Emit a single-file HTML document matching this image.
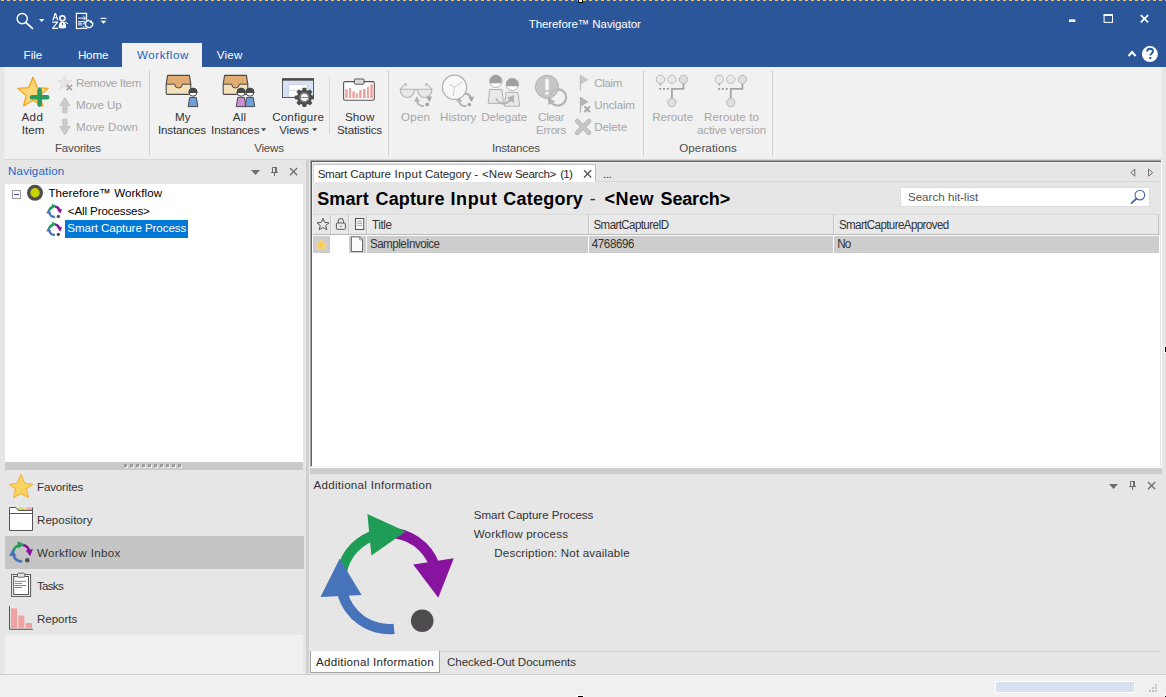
<!DOCTYPE html>
<html>
<head>
<meta charset="utf-8">
<title>Therefore Navigator</title>
<style>
html,body{margin:0;padding:0;}
body{width:1166px;height:697px;position:relative;overflow:hidden;background:#e6e6e6;font-family:"Liberation Sans",sans-serif;}
.a{position:absolute;}
.t{position:absolute;white-space:pre;line-height:20px;font-family:"Liberation Sans",sans-serif;}
svg{position:absolute;overflow:visible;}
</style>
</head>
<body>
<!-- ===== window frame / title bar ===== -->
<div class="a" id="titlebar" style="left:0;top:0;width:1166px;height:67px;background:#2b579a;"></div>
<div class="a" id="dash" style="left:1px;top:0;width:1165px;height:1px;background:repeating-linear-gradient(90deg,#f4c35e 0,#f4c35e 3px,#2b579a 3px,#2b579a 6px);"></div>
<div class="a" style="left:578px;top:0;width:3px;height:2px;background:#fff;border:1px solid #000;border-top:none;"></div>

<!-- active ribbon tab -->
<div class="a" style="left:122px;top:43px;width:80px;height:24px;background:#f1f1f1;"></div>

<!-- ===== ribbon ===== -->
<div class="a" style="left:0;top:67px;width:1166px;height:94px;background:#e6e6e6;"></div>
<div class="a" id="ribbon" style="left:4px;top:67px;width:1156px;height:92px;background:#f1f1f1;border-bottom:1px solid #d6d6d6;border-left:1px solid #ececec;border-right:1px solid #ececec;box-sizing:content-box;"></div>
<!-- group separators -->
<div class="a" style="left:149px;top:70px;width:1px;height:86px;background:#d2d2d2;"></div>
<div class="a" style="left:388px;top:70px;width:1px;height:86px;background:#d2d2d2;"></div>
<div class="a" style="left:643px;top:70px;width:1px;height:86px;background:#d2d2d2;"></div>
<div class="a" style="left:772px;top:70px;width:1px;height:86px;background:#d2d2d2;"></div>
<div class="a" style="left:329px;top:77px;width:1px;height:57px;background:#d8d8d8;"></div>

<!-- ===== body background ===== -->
<div class="a" style="left:0;top:160px;width:5px;height:514px;background:#e6e6e6;"></div>
<div class="a" style="left:1162px;top:160px;width:4px;height:514px;background:#e6e6e6;"></div>

<!-- ===== navigation panel ===== -->
<div class="a" id="navtree" style="left:5px;top:184px;width:298px;height:278px;background:#ffffff;"></div>
<div class="a" style="left:65px;top:220px;width:123px;height:18px;background:#0078d7;"></div>
<!-- gripper -->
<div class="a" style="left:5px;top:462px;width:298px;height:8px;background:#cacaca;"></div>
<div class="a" id="grip" style="left:124px;top:464px;width:60px;height:3px;"></div>
<!-- nav list -->
<div class="a" style="left:5px;top:536px;width:299px;height:33px;background:#c5c5c5;"></div>
<div class="a" style="left:5px;top:635px;width:298px;height:39px;background:#f0f0f0;"></div>
<!-- vertical splitter -->
<div class="a" style="left:306px;top:160px;width:3px;height:514px;background:#d0d0d0;"></div><div class="a" style="left:309px;top:160px;width:1px;height:514px;background:#ebebeb;"></div>

<!-- ===== main hit-list panel ===== -->
<div class="a" id="main" style="left:310px;top:160px;width:851px;height:307px;background:#e6e6e6;"></div>
<div class="a" style="left:310px;top:160px;width:852px;height:1px;background:#a6a6a6;"></div><div class="a" style="left:311px;top:161px;width:850px;height:1px;background:#626262;"></div>
<div class="a" style="left:310px;top:160px;width:1px;height:307px;background:#a6a6a6;"></div><div class="a" style="left:311px;top:161px;width:1px;height:305px;background:#626262;"></div>
<div class="a" style="left:312px;top:162px;width:848px;height:1px;background:#f2f2f2;"></div><div class="a" style="left:312px;top:162px;width:1px;height:73px;background:#f2f2f2;"></div>
<div class="a" style="left:1160px;top:162px;width:1px;height:304px;background:#e3e3e3;"></div><div class="a" style="left:1161px;top:160px;width:1px;height:307px;background:#fcfcfc;"></div>
<div class="a" style="left:312px;top:466px;width:849px;height:1px;background:#f2f2f2;"></div><div class="a" style="left:310px;top:467px;width:852px;height:1px;background:#ffffff;"></div>
<!-- tab -->
<div class="a" style="left:313px;top:164px;width:283px;height:18px;background:#ffffff;border-top:1px solid #c4c4c4;border-right:1px solid #bcbcbc;border-left:1px solid #d4d4d4;box-sizing:border-box;"></div>
<div class="a" style="left:595px;top:181px;width:565px;height:1px;background:#d6d6d6;"></div>
<!-- search box -->
<div class="a" style="left:900px;top:187px;width:250px;height:20px;background:#ffffff;border:1px solid #dcdcdc;box-sizing:border-box;"></div>
<!-- header row -->
<div class="a" id="hdr" style="left:313px;top:214px;width:845px;height:19px;background:#e9e9e9;border-top:1px solid #dcdcdc;border-bottom:1px solid #b9b9b9;border-right:1px solid #c0c0c0;"></div>
<div class="a" style="left:330px;top:215px;width:1px;height:19px;background:#c4c4c4;"></div><div class="a" style="left:331px;top:215px;width:1px;height:19px;background:#f2f2f2;"></div>
<div class="a" style="left:348px;top:215px;width:1px;height:19px;background:#c4c4c4;"></div><div class="a" style="left:349px;top:215px;width:1px;height:19px;background:#f2f2f2;"></div>
<div class="a" style="left:366px;top:215px;width:1px;height:19px;background:#c4c4c4;"></div><div class="a" style="left:367px;top:215px;width:1px;height:19px;background:#f2f2f2;"></div>
<div class="a" style="left:588px;top:215px;width:1px;height:19px;background:#c4c4c4;"></div><div class="a" style="left:589px;top:215px;width:1px;height:19px;background:#f2f2f2;"></div>
<div class="a" style="left:833px;top:215px;width:1px;height:19px;background:#c4c4c4;"></div><div class="a" style="left:834px;top:215px;width:1px;height:19px;background:#f2f2f2;"></div>
<!-- list body -->
<div class="a" style="left:312px;top:235px;width:848px;height:231px;background:#ffffff;"></div>
<div class="a" style="left:313px;top:236px;width:17px;height:17px;background:#cdcdcd;"></div>
<div class="a" style="left:349px;top:236px;width:17px;height:17px;background:#cdcdcd;"></div>
<div class="a" style="left:367px;top:236px;width:221px;height:17px;background:#cdcdcd;"></div>
<div class="a" style="left:589px;top:236px;width:244px;height:17px;background:#cdcdcd;"></div>
<div class="a" style="left:834px;top:236px;width:325px;height:17px;background:#cdcdcd;"></div>

<!-- horizontal splitter -->
<div class="a" style="left:310px;top:468px;width:852px;height:6px;background:#cecece;"></div>

<!-- ===== additional information panel ===== -->
<div class="a" style="left:310px;top:651px;width:851px;height:1px;background:#cfcfcf;"></div>
<div class="a" style="left:310px;top:651px;width:130px;height:22px;background:#ffffff;border:1px solid #a0a0a0;border-top:none;box-sizing:border-box;"></div>

<!-- ===== status bar ===== -->
<div class="a" style="left:0;top:674px;width:1166px;height:23px;background:#f0f0f0;border-top:1px solid #cfcfcf;box-sizing:border-box;"></div>
<div class="a" style="left:995px;top:681px;width:140px;height:12px;background:#d6e0f0;border:1px solid #ffffff;box-sizing:border-box;"></div>

<!-- ===== title bar icons ===== -->
<svg width="1166" height="67" style="left:0;top:0" viewBox="0 0 1166 67">
 <!-- magnifier -->
 <circle cx="22.2" cy="18.6" r="5.1" fill="none" stroke="#fff" stroke-width="1.4"/>
 <path d="M26 22.6 L32.4 28.4" stroke="#fff" stroke-width="1.7" stroke-linecap="round"/>
 <path d="M39 19 h5.4 l-2.7 3z" fill="#fff"/>
 <!-- A-Z person -->
 <g fill="#fff" stroke="none">
  <path d="M52.2 20.3 L54.7 13 h1.3 L58.4 20.3 h-1.3 l-0.65 -2 h-2.3 l-0.65 2z M54.5 17.2 h1.7 l-0.85 -2.7z"/>
  <path d="M52.4 21.6 h5.6 v0.9 l-4.2 5.3 h4.3 v1.1 h-5.9 v-0.9 l4.2 -5.3 h-4z"/>
  <circle cx="62.4" cy="18.2" r="3.3"/>
  <path d="M58.7 27.8 c0 -4.6 1.4 -6.4 3.7 -6.4 c2.3 0 3.7 1.8 3.7 6.4 q-3.7 1.6 -7.4 0z"/>
 </g>
 <circle cx="62.4" cy="18.2" r="1.7" fill="#2b579a"/>
 <rect x="61.9" y="23" width="1" height="2.4" fill="#2b579a"/>
 <path d="M65 21.7 l3 2.2" stroke="#fff" stroke-width="1"/>
 <!-- document w/ arrow -->
 <g>
  <rect x="76.5" y="13.4" width="10" height="15" fill="none" stroke="#fff" stroke-width="1.3"/>
  <rect x="77.2" y="14.1" width="3.6" height="13.6" fill="#244a86"/>
  <path d="M78 18.1 h7 M78 21.6 h6.4 M78 23.2 h3.8 M78 24.9 h3.8" stroke="#fff" stroke-width="1"/>
  <path d="M83.4 16.2 l2.2 1.9 l-2.2 1.9" fill="none" stroke="#fff" stroke-width="0.9"/>
  <path d="M84.6 21.6 v2.2 h-2" fill="none" stroke="#fff" stroke-width="0.9"/>
  <rect x="83" y="26.4" width="1.1" height="1.1" fill="#fff"/>
  <rect x="85" y="25.7" width="1.1" height="1.1" fill="#fff"/>
  <circle cx="89.2" cy="24" r="4.6" fill="#2b579a"/>
  <path d="M92.4 22.2 a3.7 3.7 0 1 1 -3.4 -2" fill="none" stroke="#fff" stroke-width="1.4"/>
  <path d="M87.6 20.4 h4.4 v3.4z" fill="#fff"/>
 </g>
 <!-- customize qat -->
 <rect x="100.6" y="17.8" width="5.8" height="1.1" fill="#fff"/>
 <path d="M100.6 20.7 h5.8 l-2.9 3z" fill="#fff"/>
 <!-- window controls -->
 <rect x="1069" y="19.4" width="6.3" height="2.6" fill="#fff"/>
 <rect x="1104.1" y="15.2" width="8.4" height="7.2" fill="none" stroke="#fff" stroke-width="1"/>
 <rect x="1103.6" y="14.1" width="9.4" height="1.8" fill="#fff"/>
 <path d="M1140.8 15.1 l7.3 7.3 M1148.1 15.1 l-7.3 7.3" stroke="#fff" stroke-width="1.7"/>
 <path d="M1128.6 56 l3.5 -3.9 l3.5 3.9" fill="none" stroke="#fff" stroke-width="2"/>
 <circle cx="1149.9" cy="54.1" r="8" fill="#fff"/>
 <path d="M1147.2 51.6 c0 -1.8 1.2 -2.8 2.8 -2.8 c1.7 0 2.9 1 2.9 2.5 c0 1.2 -0.6 1.8 -1.5 2.4 c-0.8 0.5 -1.1 0.9 -1.1 1.9" fill="none" stroke="#2b579a" stroke-width="1.9"/>
 <rect x="1149.3" y="57" width="2" height="2.1" fill="#2b579a"/>
</svg>
<!-- ===== ribbon icons ===== -->
<svg width="1166" height="93" style="left:0;top:67px" viewBox="0 67 1166 93">
 <defs>
  <!-- mini workflow arrows (disabled grey), centered at 0,0, r~5 -->
  <g id="wfgrey">
   <path d="M-6.3 0.6 Q-5.6 5.2 0.8 5.5" fill="none" stroke="#b4b4b4" stroke-width="1.9"/>
   <path d="M-9.3 1.1 L-3.3 1.1 L-6.4 -4.4z" fill="#b4b4b4"/>
   <path d="M-1.2 -7.2 Q3.6 -7.4 5.8 -2.6" fill="none" stroke="#acacac" stroke-width="2.2"/>
   <path d="M3.0 -3.2 L8.6 -4.3 L6.4 1.4z" fill="#a4a4a4"/>
   <circle cx="3.9" cy="3.9" r="1.9" fill="#a8a8a8"/>
  </g>
  <g id="reroute">
   <path d="M23.1 4.2 V9.5 H11.5 V19" fill="none" stroke="#a6a6a6" stroke-width="1.8"/>
   <path d="M0 4.2 V6.2" stroke="#a6a6a6" stroke-width="1.5"/>
   <path d="M-1.2 9.5 H9" stroke="#9c9c9c" stroke-width="1.8" stroke-dasharray="2 1.8"/>
   <circle cx="0" cy="0" r="4.2" fill="#e8e8e8" stroke="#b9b9b9" stroke-width="1"/>
   <circle cx="11.5" cy="0" r="4.2" fill="#e8e8e8" stroke="#c0c0c0" stroke-width="1"/>
   <circle cx="23.1" cy="0" r="4.2" fill="#dfdfdf" stroke="#b9b9b9" stroke-width="1"/>
   <circle cx="11.5" cy="23.1" r="4.2" fill="#dfdfdf" stroke="#b9b9b9" stroke-width="1"/>
  </g>
  <g id="inbox">
   <path d="M1.6 0.4 H23.4 L24.8 9.2 V18.2 a1.2 1.2 0 0 1 -1.2 1.2 H1.4 a1.2 1.2 0 0 1 -1.2 -1.2 V9.2z" fill="#f3e0b8" stroke="none"/>
   <path d="M1.6 0.4 H23.4 L24.8 9.2 H16.3 a3.8 3.8 0 0 1 -7.6 0 H0.2z" fill="#dfad72" stroke="none"/>
   <path d="M0.2 9.2 H8.7 a3.8 3.8 0 0 0 7.6 0 H24.8" fill="none" stroke="#4a4a4a" stroke-width="1"/>
   <path d="M1.6 0.4 H23.4 L24.8 9.2 V18.2 a1.2 1.2 0 0 1 -1.2 1.2 H1.4 a1.2 1.2 0 0 1 -1.2 -1.2 V9.2z" fill="none" stroke="#4a4a4a" stroke-width="1.1" stroke-linejoin="round"/>
  </g>
  <g id="person">
   <path d="M-3.3 5.2 H3.3 L4.9 14.4 H-4.9z" stroke="#4a4a4a" stroke-width="1" stroke-linejoin="round"/>
   <circle cx="0" cy="0" r="4" fill="#fff" stroke="#4a4a4a" stroke-width="1"/>
   <path d="M-4.35 0.9 A4.45 4.45 0 1 1 4.35 0.9z" fill="#48484a" stroke="none"/>
  </g>
 </defs>

 <!-- Add Item star -->
 <path d="M32.9 77.2 L37.3 87.6 L48.2 88.3 L39.9 95.4 L42.6 106 L32.9 100.2 L23.6 106 L26.2 95.4 L17.8 88.3 L28.7 87.6z" fill="#fbd777" stroke="#f4a620" stroke-width="1.3" stroke-linejoin="round"/>
 <path d="M39.6 90 V104.6 M32 97.3 H47.2" stroke="#2c9b5d" stroke-width="4.6" stroke-linecap="round"/>
 <!-- Remove Item (disabled) -->
 <path d="M64.7 75.6 L66.7 80.3 L71.8 80.7 L67.9 84 L69.2 89 L64.7 86.3 L60.3 89 L61.5 84 L57.6 80.7 L62.7 80.3z" fill="#e6e6e6" stroke="#dcdcdc" stroke-width="0.8"/>
 <path d="M66.6 84.8 l5.4 5.4 M72 84.8 l-5.4 5.4" stroke="#a8a8a8" stroke-width="1.8"/>
 <!-- Move up / down -->
 <path d="M64.9 97.6 L70 105.6 H67 V112.8 H62.8 V105.6 H59.8z" fill="#cbcbcb" stroke="#bcbcbc" stroke-width="0.8"/>
 <path d="M64.9 134.9 L70 126.6 H67 V119.2 H62.8 V126.6 H59.8z" fill="#cbcbcb" stroke="#bcbcbc" stroke-width="0.8"/>

 <!-- My Instances -->
 <use href="#inbox" x="166" y="75"/>
 <use href="#person" x="193" y="92.2" fill="#6f9fd8"/>
 <!-- All Instances -->
 <use href="#inbox" x="223" y="75"/>
 <use href="#person" x="241.1" y="92.2" fill="#cc8fce"/>
 <use href="#person" x="249.9" y="92.2" fill="#6f9fd8"/>

 <!-- Configure Views -->
 <rect x="282.6" y="79" width="30.8" height="18.4" fill="#fff" stroke="#4a4a4a" stroke-width="1"/>
 <rect x="283.1" y="80.6" width="29.8" height="3.8" fill="#d4e0f4"/>
 <rect x="283.1" y="84.4" width="5.2" height="12.5" fill="#d4e0f4"/>
 <rect x="307.4" y="84.4" width="5.5" height="12.5" fill="#d4e0f4"/>
 <path d="M288.3 84.6 H307.4 M288.3 90.3 H307.4 M288.3 84.4 V97 M307.4 84.4 V97" stroke="#b8c4d8" stroke-width="0.7"/>
 <rect x="282.1" y="78.2" width="31.8" height="2.5" fill="#4a4a4a"/>
 <g transform="translate(304.4 97.4)">
  <g fill="#4d4d4f">
   <rect x="-2" y="-9.6" width="4" height="19.2" rx="0.8"/>
   <rect x="-2" y="-9.6" width="4" height="19.2" rx="0.8" transform="rotate(45)"/>
   <rect x="-2" y="-9.6" width="4" height="19.2" rx="0.8" transform="rotate(90)"/>
   <rect x="-2" y="-9.6" width="4" height="19.2" rx="0.8" transform="rotate(135)"/>
  </g>
  <circle r="5.6" fill="#fff" stroke="#4d4d4f" stroke-width="3.6"/>
  <circle r="4.4" fill="none" stroke="#848486" stroke-width="1.3"/>
  <path d="M-3.8 0 H3.8" stroke="#6a6a6a" stroke-width="0.9"/>
 </g>

 <!-- Show Statistics -->
 <rect x="343.6" y="81.6" width="30.7" height="18.7" rx="1.6" fill="#fff" stroke="#555" stroke-width="1.1"/>
 <rect x="354.4" y="79" width="9.6" height="5.2" rx="0.9" fill="#dcdcdc" stroke="#555" stroke-width="1"/>
 <g fill="#ee9f9a">
  <rect x="345.3" y="89.2" width="2.4" height="9"/>
  <rect x="349.1" y="87.9" width="1.9" height="10.3"/>
  <rect x="352.4" y="91.5" width="2.4" height="6.7"/>
  <rect x="356.1" y="93.1" width="1.8" height="5.1"/>
  <rect x="359.2" y="90.1" width="2.4" height="8.1"/>
  <rect x="363" y="88.9" width="2.6" height="9.3"/>
  <rect x="367" y="86.8" width="1.9" height="11.4"/>
  <rect x="370.3" y="84.3" width="2.4" height="13.9"/>
 </g>

 <!-- Open (glasses, disabled) -->
 <use href="#wfgrey" x="423.3" y="100.6"/>
 <g fill="#e8e8e8" stroke="#b2b2b2" stroke-width="1.1">
  <path d="M400.2 89.3 H414.6 A7.2 8.2 0 0 1 400.2 89.3z"/>
  <path d="M417.4 89.3 H431.9 A7.25 8.2 0 0 1 417.4 89.3z"/>
  <path d="M414.6 89.5 H417.4" fill="none"/>
  <path d="M400.3 89.1 L405.9 83.3 L406.5 86.2" fill="none" stroke-linejoin="round"/>
  <path d="M431.8 89.1 L426.1 83.3 L425.5 86.2" fill="none" stroke-linejoin="round"/>
 </g>
 <!-- History -->
 <use href="#wfgrey" x="465.4" y="100.7"/>
 <circle cx="454.5" cy="87.3" r="12.1" fill="#f8f8f8" stroke="#aeaeae" stroke-width="1.2"/>
 <path d="M454.4 87.4 L449.2 84.1 M454.4 87.4 L462 82.1 M454.4 87.4 L453.3 96" stroke="#cacaca" stroke-width="1" fill="none"/>
 <!-- Delegate -->
 <g stroke="#b2b2b2" stroke-width="1">
  <path d="M489.6 89.5 H502 L503.4 103.4 H488.2z" fill="#e8e8e8"/>
  <circle cx="495.8" cy="81.3" r="6.2" fill="#fff"/>
  <path d="M489.9 83.2 A6.2 6.2 0 1 1 501.7 83.2z" fill="#a0a0a0" stroke="none"/>
  <path d="M506 92.4 H518 L519.6 106.2 H504.4z" fill="#e8e8e8"/>
  <circle cx="512.3" cy="84.4" r="6.2" fill="#fff"/>
  <path d="M506.4 86.3 A6.2 6.2 0 1 1 518.2 86.3z" fill="#a0a0a0" stroke="none"/>
 </g>
 <path d="M496 98.4 Q499.5 104.6 505 103.6 Q508.6 102.4 511 99.6" fill="none" stroke="#b0b0b0" stroke-width="1.8"/>
 <path d="M514.2 95 L513.8 103.2 L507 97.8z" fill="#b0b0b0"/>
 <!-- Clear Errors -->
 <circle cx="557.8" cy="97.4" r="8.3" fill="none" stroke="#b4b4b4" stroke-width="2.3"/>
 <circle cx="547" cy="86.8" r="11.6" fill="#c6c6c6" stroke="#b4b4b4" stroke-width="1"/>
 <path d="M550.6 95 A8.3 8.3 0 0 1 556.6 89.2" fill="none" stroke="#b9b9b9" stroke-width="1.6"/>
 <rect x="545.4" y="79" width="3.2" height="11.2" fill="#fafafa"/>
 <rect x="545.4" y="92" width="3.2" height="2.5" fill="#fafafa"/>
 <path d="M547.8 97.4 L548.4 105 L555.4 101.6z" fill="#b4b4b4"/>
 <!-- Claim / Unclaim / Delete -->
 <path d="M580.4 75 V90.6" stroke="#b4b4b4" stroke-width="1"/>
 <path d="M580.9 75 L588.6 79.7 L580.9 84.2z" fill="#c8c8c8"/>
 <path d="M580.4 97.1 V112.7" stroke="#a8a8a8" stroke-width="1"/>
 <path d="M580.9 97.1 L588.6 101.9 L580.9 106.5z" fill="#b4b4b4"/>
 <path d="M584.4 106.4 l5.6 5.6 M590 106.4 l-5.6 5.6" stroke="#a6a6a6" stroke-width="2"/>
 <path d="M577.2 121.2 L589 132.8 M589 121.2 L577.2 132.8" stroke="#b4b4b4" stroke-width="4.6" stroke-linecap="round"/>
 <path d="M577.2 121.2 L589 132.8 M589 121.2 L577.2 132.8" stroke="#c6c6c6" stroke-width="3.2" stroke-linecap="round"/>
 <!-- Reroute icons -->
 <use href="#reroute" x="660.4" y="79.4"/>
 <use href="#reroute" x="719.3" y="79.4"/>
 <!-- dropdown arrows on split buttons -->
 <path d="M261 128.2 h5.2 l-2.6 3z" fill="#444"/>
 <path d="M312.1 128.2 h5.2 l-2.6 3z" fill="#444"/>
</svg>
<!-- ===== panel icons ===== -->
<svg width="1166" height="537" style="left:0;top:160px" viewBox="0 160 1166 537">
 <defs>
  <!-- workflow icon in big-icon coordinates (bbox 320..454 x 513..634) -->
  <g id="wf">
   <path d="M337.0 569.9 A53.2 53.2 0 0 1 376.1 529.4 L378.6 539.4 A42.9 42.9 0 0 0 347.0 572.1z" fill="#1f9d57"/>
   <path d="M396.4 528.3 A53.2 53.2 0 0 1 441.4 571.8 L431.2 573.6 A42.9 42.9 0 0 0 395.0 538.5z" fill="#87139f"/>
   <path d="M367.4 513.9 L405.7 531.4 L371.4 555.6z" fill="#1f9d57"/>
   <path d="M453.8 558.2 L413.2 564.4 L438.3 597.8z" fill="#87139f"/>
   <path d="M394.6 633.9 A53.2 53.2 0 0 1 337.4 593.9 L347.4 591.4 A42.9 42.9 0 0 0 393.5 623.7z" fill="#4673ba"/>
   <path d="M320.5 597.1 L361.6 595.1 L339.7 558.8z" fill="#4673ba"/>
   <circle cx="422.2" cy="620.8" r="11.3" fill="#4d4b4e"/>
  </g>
  <g id="wfS">
   <path d="M337.0 569.9 A53.2 53.2 0 0 1 376.1 529.4 L381.0 549.0 A33 33 0 0 0 356.7 574.1z" fill="#1f9d57"/>
   <path d="M396.4 528.3 A53.2 53.2 0 0 1 441.4 571.8 L421.5 575.3 A33 33 0 0 0 393.6 548.3z" fill="#87139f"/>
   <path d="M367.4 513.9 L405.7 531.4 L371.4 555.6z" fill="#1f9d57"/>
   <path d="M453.8 558.2 L413.2 564.4 L438.3 597.8z" fill="#87139f"/>
   <path d="M394.6 633.9 A53.2 53.2 0 0 1 337.4 593.9 L357.0 589.0 A33 33 0 0 0 392.4 613.8z" fill="#4673ba"/>
   <path d="M320.5 597.1 L361.6 595.1 L339.7 558.8z" fill="#4673ba"/>
   <circle cx="422.2" cy="620.8" r="14.1" fill="#4d4b4e"/>
   </g>
  <g id="wfM">
   <path d="M337.0 569.9 A53.2 53.2 0 0 1 376.1 529.4 L379.7 543.6 A38.5 38.5 0 0 0 351.3 573.0z" fill="#1f9d57"/>
   <path d="M396.4 528.3 A53.2 53.2 0 0 1 441.4 571.8 L426.9 574.3 A38.5 38.5 0 0 0 394.4 542.9z" fill="#87139f"/>
   <path d="M367.4 513.9 L405.7 531.4 L371.4 555.6z" fill="#1f9d57"/>
   <path d="M453.8 558.2 L413.2 564.4 L438.3 597.8z" fill="#87139f"/>
   <path d="M394.6 633.9 A53.2 53.2 0 0 1 337.4 593.9 L351.6 590.3 A38.5 38.5 0 0 0 393.0 619.3z" fill="#4673ba"/>
   <path d="M320.5 597.1 L361.6 595.1 L339.7 558.8z" fill="#4673ba"/>
   <circle cx="422.2" cy="620.8" r="12.4" fill="#4d4b4e"/>
   </g>
  <g id="hdrbtns">
   <path d="M0 10 h9 l-4.5 5z" fill="#6e6e6e"/>
   <path d="M21.5 12 V7.5 H25" fill="none" stroke="#6e6e6e" stroke-width="1"/>
   <rect x="24" y="7" width="2" height="5.5" fill="#6e6e6e"/>
   <path d="M20 12.5 h7 M23.5 13 v3" stroke="#6e6e6e" stroke-width="1"/>
   <path d="M39 8 l7.2 7.2 M46.2 8 l-7.2 7.2" stroke="#6e6e6e" stroke-width="1.3"/>
  </g>
 </defs>

 <!-- nav header buttons -->
 <use href="#hdrbtns" x="251" y="160"/>
 <!-- additional info header buttons -->
 <use href="#hdrbtns" x="1109" y="474"/>

 <!-- tree expander -->
 <rect x="12.5" y="190.5" width="8" height="8" fill="#fcfcfc" stroke="#9b9b9b" stroke-width="1"/>
 <path d="M14 194.5 h5" stroke="#3b4a9c" stroke-width="1"/>
 <!-- therefore workflow circle -->
 <circle cx="35" cy="192.8" r="8" fill="#4f4d50"/>
 <circle cx="35" cy="192.8" r="4.7" fill="#c9d400"/>
 <!-- small workflow icons -->
 <use href="#wfS" transform="translate(46.2 203.6) scale(0.119) translate(-320.3 -513)"/>
 <use href="#wfS" transform="translate(46.2 221.6) scale(0.119) translate(-320.3 -513)"/>

 <!-- gripper dots -->
 <g fill="#f4f4f4"><rect x="125" y="465" width="3" height="3"/><rect x="131" y="465" width="3" height="3"/><rect x="137" y="465" width="3" height="3"/><rect x="143" y="465" width="3" height="3"/><rect x="149" y="465" width="3" height="3"/><rect x="155" y="465" width="3" height="3"/><rect x="161" y="465" width="3" height="3"/><rect x="167" y="465" width="3" height="3"/><rect x="173" y="465" width="3" height="3"/><rect x="179" y="465" width="3" height="3"/></g>
 <g fill="#9c9c9c"><rect x="124" y="464" width="3" height="3"/><rect x="130" y="464" width="3" height="3"/><rect x="136" y="464" width="3" height="3"/><rect x="142" y="464" width="3" height="3"/><rect x="148" y="464" width="3" height="3"/><rect x="154" y="464" width="3" height="3"/><rect x="160" y="464" width="3" height="3"/><rect x="166" y="464" width="3" height="3"/><rect x="172" y="464" width="3" height="3"/><rect x="178" y="464" width="3" height="3"/></g>

 <!-- nav list icons -->
 <path d="M20.9 474.4 L24.8 483.2 L32.6 484.3 L26.4 488.8 L28.5 497.6 L20.9 493.5 L13.7 497.6 L15.5 488.8 L9.3 484.3 L17.1 483.2z" fill="#fad25f" stroke="#f4b63e" stroke-width="1.1" stroke-linejoin="round"/>
 <!-- repository -->
 <path d="M9.5 507.5 H15.9 L18.4 510.5 H32.5 V530.5 H9.5z" fill="#fff"/>
 <path d="M17.6 510.5 h7.8 v-1.2 q0 -1.8 -1.9 -1.8 h-3.8 q-1.3 0 -2.2 1.1z" fill="#c6d96b"/>
 <path d="M25.9 510.5 h6.6 v-3 h-4.7 q-1.9 0 -1.9 1.8z" fill="#f4a5a5"/>
 <path d="M32.5 507.5 V530.5 H9.5 V507.5 H15.9 L18.4 510.5 H32.5" fill="none" stroke="#555" stroke-width="1" stroke-linejoin="round"/>
 <path d="M9.5 513.5 H32.5" stroke="#555" stroke-width="1"/>
 <!-- workflow inbox -->
 <use href="#wfM" transform="translate(9.1 541) scale(0.1785) translate(-320.3 -513)"/>
 <!-- tasks -->
 <rect x="11.6" y="574.6" width="19" height="21.8" fill="#f6f6f6" stroke="#555" stroke-width="1"/>
 <rect x="13.7" y="576.5" width="14.8" height="18" fill="#fff" stroke="#555" stroke-width="1"/>
 <rect x="17.5" y="573.2" width="7.3" height="4" rx="1" fill="#e6e6e6" stroke="#555" stroke-width="0.9"/>
 <path d="M14.9 581.3 H26 M14.9 583.4 H22 M14.9 585.5 H26 M14.9 587.5 H22" stroke="#666" stroke-width="0.8"/>
 <!-- reports -->
 <rect x="10.9" y="608.3" width="6.1" height="20" fill="#f0a3a0"/>
 <rect x="18.3" y="615.6" width="6.1" height="12.7" fill="#f0a3a0"/>
 <rect x="25.8" y="623" width="6.2" height="5.3" fill="#f0a3a0"/>
 <path d="M9.5 606.1 V629.3 H32.9" fill="none" stroke="#555" stroke-width="1"/>

 <!-- main panel: tab close, arrows, search icon -->
 <path d="M584 170.3 l7.2 7.2 M591.2 170.3 l-7.2 7.2" stroke="#555" stroke-width="1.3"/>
 <path d="M1134.8 169 v7.2 l-4 -3.6z" fill="none" stroke="#6e6e6e" stroke-width="1"/>
 <path d="M1148.6 169 v7.2 l4 -3.6z" fill="none" stroke="#6e6e6e" stroke-width="1"/>
 <circle cx="1139.9" cy="195.1" r="4.8" fill="none" stroke="#4668aa" stroke-width="1.1"/>
 <path d="M1136.4 198.7 L1131.6 203.2" stroke="#3d62a5" stroke-width="1.7" stroke-linecap="round"/>

 <!-- header icons: star, lock, doc -->
 <path d="M323 218.4 L324.7 222.4 L329 222.8 L325.7 225.6 L326.8 229.8 L323 227.5 L319.2 229.8 L320.3 225.6 L317 222.8 L321.3 222.4z" fill="none" stroke="#555" stroke-width="1" stroke-linejoin="round"/>
 <rect x="336.4" y="223" width="9" height="6.3" rx="0.8" fill="#ececec" stroke="#555" stroke-width="1"/>
 <path d="M338.2 223 v-1.6 a2.7 2.9 0 0 1 5.4 0 v1.6" fill="none" stroke="#555" stroke-width="1"/>
 <rect x="340.4" y="225.5" width="1.1" height="1.4" fill="#555"/>
 <rect x="355.5" y="218.5" width="8.3" height="11" fill="#f4f4f4" stroke="#555" stroke-width="1"/>
 <path d="M357.4 221.3 h4.5 M357.4 223.4 h4.5 M357.4 225.5 h4.5" stroke="#8a8a8a" stroke-width="0.7"/>
 <!-- row icons -->
 <path d="M321.1 239.2 L322.8 243.2 L326.9 243.5 L323.8 246.2 L324.8 250 L321.1 248 L317.4 250 L318.4 246.2 L315.3 243.5 L319.4 243.2z" fill="#f8cb55" stroke="#f9d87c" stroke-width="0.9" stroke-linejoin="round"/>
 <path d="M351.4 236.9 H359.6 L362.5 239.8 V251.5 H351.4z" fill="#fbfcfd" stroke="#666" stroke-width="1" stroke-linejoin="round"/>
 <path d="M359.6 236.9 V239.8 H362.5" fill="none" stroke="#888" stroke-width="0.8"/>

 <!-- big workflow icon -->
 <use href="#wf"/>

 <!-- status bar size grip -->
 <g fill="#c2c2c2">
  <rect x="1155" y="684" width="2" height="2"/>
  <rect x="1152" y="687" width="2" height="2"/><rect x="1155" y="687" width="2" height="2"/>
  <rect x="1149" y="690" width="2" height="2"/><rect x="1152" y="690" width="2" height="2"/><rect x="1155" y="690" width="2" height="2"/>
 </g>
</svg>


<span class="t" style="left:528.70px;top:14.28px;font-size:11.6px;color:#ffffff;letter-spacing:-0.130px;">Therefore™ Navigator</span>
<span class="t" style="left:23.60px;top:45.08px;font-size:11.6px;color:#ffffff;letter-spacing:0.003px;">File</span>
<span class="t" style="left:77.90px;top:45.08px;font-size:11.6px;color:#ffffff;letter-spacing:-0.159px;">Home</span>
<span class="t" style="left:137.10px;top:45.08px;font-size:11.6px;color:#2462c4;letter-spacing:0.529px;">Workflow</span>
<span class="t" style="left:216.70px;top:45.08px;font-size:11.6px;color:#ffffff;letter-spacing:0.220px;">View</span>
<span class="t" style="left:21.50px;top:106.78px;font-size:11.6px;color:#333333;letter-spacing:0.353px;">Add</span>
<span class="t" style="left:21.80px;top:119.78px;font-size:11.6px;color:#333333;letter-spacing:-0.016px;">Item</span>
<span class="t" style="left:75.90px;top:72.88px;font-size:11.6px;color:#a6a6a6;letter-spacing:-0.350px;">Remove Item</span>
<span class="t" style="left:75.90px;top:94.68px;font-size:11.6px;color:#a6a6a6;letter-spacing:-0.087px;">Move Up</span>
<span class="t" style="left:75.90px;top:116.98px;font-size:11.6px;color:#a6a6a6;letter-spacing:0.098px;">Move Down</span>
<span class="t" style="left:55.00px;top:137.68px;font-size:11.6px;color:#4c4c4c;letter-spacing:-0.210px;">Favorites</span>
<span class="t" style="left:175.00px;top:106.78px;font-size:11.6px;color:#333333;letter-spacing:0.116px;">My</span>
<span class="t" style="left:158.00px;top:119.78px;font-size:11.6px;color:#333333;letter-spacing:-0.192px;">Instances</span>
<span class="t" style="left:232.80px;top:106.78px;font-size:11.6px;color:#333333;letter-spacing:0.170px;">All</span>
<span class="t" style="left:211.10px;top:119.78px;font-size:11.6px;color:#333333;letter-spacing:-0.158px;">Instances</span>
<span class="t" style="left:254.20px;top:137.68px;font-size:11.6px;color:#4c4c4c;letter-spacing:-0.224px;">Views</span>
<span class="t" style="left:272.20px;top:106.78px;font-size:11.6px;color:#333333;letter-spacing:0.180px;">Configure</span>
<span class="t" style="left:279.20px;top:119.78px;font-size:11.6px;color:#333333;letter-spacing:-0.184px;">Views</span>
<span class="t" style="left:344.90px;top:106.78px;font-size:11.6px;color:#333333;letter-spacing:0.146px;">Show</span>
<span class="t" style="left:337.00px;top:119.78px;font-size:11.6px;color:#333333;letter-spacing:-0.139px;">Statistics</span>
<span class="t" style="left:401.00px;top:106.78px;font-size:11.6px;color:#a6a6a6;letter-spacing:0.231px;">Open</span>
<span class="t" style="left:440.00px;top:106.78px;font-size:11.6px;color:#a6a6a6;letter-spacing:0.046px;">History</span>
<span class="t" style="left:481.30px;top:106.78px;font-size:11.6px;color:#a6a6a6;letter-spacing:-0.078px;">Delegate</span>
<span class="t" style="left:491.90px;top:137.68px;font-size:11.6px;color:#4c4c4c;letter-spacing:-0.192px;">Instances</span>
<span class="t" style="left:538.10px;top:106.78px;font-size:11.6px;color:#a6a6a6;letter-spacing:-0.304px;">Clear</span>
<span class="t" style="left:536.00px;top:119.78px;font-size:11.6px;color:#a6a6a6;letter-spacing:-0.260px;">Errors</span>
<span class="t" style="left:594.30px;top:72.88px;font-size:11.6px;color:#a6a6a6;letter-spacing:-0.388px;">Claim</span>
<span class="t" style="left:594.30px;top:94.68px;font-size:11.6px;color:#a6a6a6;letter-spacing:-0.196px;">Unclaim</span>
<span class="t" style="left:594.30px;top:116.98px;font-size:11.6px;color:#a6a6a6;letter-spacing:-0.136px;">Delete</span>
<span class="t" style="left:652.20px;top:106.78px;font-size:11.6px;color:#a6a6a6;letter-spacing:-0.050px;">Reroute</span>
<span class="t" style="left:704.00px;top:106.78px;font-size:11.6px;color:#a6a6a6;letter-spacing:0.086px;">Reroute to</span>
<span class="t" style="left:696.90px;top:119.78px;font-size:11.6px;color:#a6a6a6;letter-spacing:-0.121px;">active version</span>
<span class="t" style="left:679.20px;top:137.68px;font-size:11.6px;color:#4c4c4c;letter-spacing:0.098px;">Operations</span>
<span class="t" style="left:8.00px;top:160.78px;font-size:11.6px;color:#1f63c9;letter-spacing:0.170px;">Navigation</span>
<span class="t" style="left:48.40px;top:182.58px;font-size:11.6px;color:#000000;letter-spacing:0.061px;">Therefore™ Workflow</span>
<span class="t" style="left:67.80px;top:200.78px;font-size:11.6px;color:#000000;letter-spacing:-0.125px;">&lt;All Processes&gt;</span>
<span class="t" style="left:67.30px;top:218.28px;font-size:11.6px;color:#ffffff;letter-spacing:-0.071px;">Smart Capture Process</span>
<span class="t" style="left:37.00px;top:476.58px;font-size:11.6px;color:#333333;letter-spacing:-0.176px;">Favorites</span>
<span class="t" style="left:37.00px;top:509.98px;font-size:11.6px;color:#333333;letter-spacing:0.008px;">Repository</span>
<span class="t" style="left:36.90px;top:542.78px;font-size:11.6px;color:#333333;letter-spacing:0.340px;">Workflow Inbox</span>
<span class="t" style="left:36.90px;top:575.58px;font-size:11.6px;color:#333333;letter-spacing:-0.688px;">Tasks</span>
<span class="t" style="left:36.90px;top:608.68px;font-size:11.6px;color:#333333;letter-spacing:-0.030px;">Reports</span>
<span class="t" style="left:317.70px;top:163.68px;font-size:11.6px;color:#2b2b2b;letter-spacing:-0.344px;">Smart</span>
<span class="t" style="left:350.30px;top:163.68px;font-size:11.6px;color:#2b2b2b;letter-spacing:-0.107px;">Capture</span>
<span class="t" style="left:394.40px;top:163.68px;font-size:11.6px;color:#2b2b2b;letter-spacing:0.361px;">Input</span>
<span class="t" style="left:425.10px;top:163.68px;font-size:11.6px;color:#2b2b2b;letter-spacing:-0.118px;">Category</span>
<span class="t" style="left:474.30px;top:163.68px;font-size:11.6px;color:#2b2b2b;letter-spacing:0.325px;">-</span>
<span class="t" style="left:481.90px;top:163.68px;font-size:11.6px;color:#2b2b2b;letter-spacing:0.108px;">&lt;New</span>
<span class="t" style="left:515.00px;top:163.68px;font-size:11.6px;color:#2b2b2b;letter-spacing:-0.359px;">Search&gt;</span>
<span class="t" style="left:560.20px;top:163.68px;font-size:11.6px;color:#2b2b2b;letter-spacing:-0.757px;">(1)</span>
<span class="t" style="left:603.00px;top:163.68px;font-size:11.6px;color:#2b2b2b;letter-spacing:-0.324px;">...</span>
<span class="t" style="left:317.20px;top:188.66px;font-size:18.0px;color:#000000;font-weight:700;letter-spacing:0.114px;">Smart</span>
<span class="t" style="left:375.50px;top:188.66px;font-size:18.0px;color:#000000;font-weight:700;letter-spacing:0.155px;">Capture</span>
<span class="t" style="left:450.50px;top:188.66px;font-size:18.0px;color:#000000;font-weight:700;letter-spacing:0.603px;">Input</span>
<span class="t" style="left:503.30px;top:188.66px;font-size:18.0px;color:#000000;font-weight:700;letter-spacing:0.221px;">Category</span>
<span class="t" style="left:589.70px;top:188.66px;font-size:18.0px;color:#333333;letter-spacing:1.000px;">-</span>
<span class="t" style="left:604.50px;top:188.66px;font-size:18.0px;color:#000000;font-weight:700;letter-spacing:0.467px;">&lt;New</span>
<span class="t" style="left:660.60px;top:188.66px;font-size:18.0px;color:#000000;font-weight:700;letter-spacing:-0.166px;">Search&gt;</span>
<span class="t" style="left:907.90px;top:186.78px;font-size:11.6px;color:#555555;letter-spacing:0.011px;">Search hit-list</span>
<span class="t" style="left:372.10px;top:214.58px;font-size:11.6px;color:#333333;letter-spacing:-0.417px;transform:scaleY(1.14);transform-origin:0 14.02px;">Title</span>
<span class="t" style="left:593.50px;top:214.58px;font-size:11.6px;color:#333333;letter-spacing:-0.619px;transform:scaleY(1.14);transform-origin:0 14.02px;">SmartCaptureID</span>
<span class="t" style="left:838.90px;top:214.58px;font-size:11.6px;color:#333333;letter-spacing:-0.605px;transform:scaleY(1.14);transform-origin:0 14.02px;">SmartCaptureApproved</span>
<span class="t" style="left:369.90px;top:233.98px;font-size:11.6px;color:#333333;letter-spacing:-0.496px;transform:scaleY(1.14);transform-origin:0 14.02px;">SampleInvoice</span>
<span class="t" style="left:591.80px;top:233.98px;font-size:11.6px;color:#333333;letter-spacing:-0.420px;transform:scaleY(1.14);transform-origin:0 14.02px;">4768696</span>
<span class="t" style="left:837.20px;top:233.98px;font-size:11.6px;color:#333333;letter-spacing:-0.764px;transform:scaleY(1.14);transform-origin:0 14.02px;">No</span>
<span class="t" style="left:313.40px;top:474.98px;font-size:11.6px;color:#333333;letter-spacing:0.289px;">Additional Information</span>
<span class="t" style="left:473.70px;top:505.18px;font-size:11.6px;color:#333333;letter-spacing:-0.038px;">Smart Capture Process</span>
<span class="t" style="left:473.70px;top:524.18px;font-size:11.6px;color:#333333;letter-spacing:0.201px;">Workflow process</span>
<span class="t" style="left:494.30px;top:542.58px;font-size:11.6px;color:#333333;letter-spacing:0.155px;">Description: Not available</span>
<span class="t" style="left:316.00px;top:651.58px;font-size:11.6px;color:#262626;letter-spacing:0.266px;">Additional Information</span>
<span class="t" style="left:447.00px;top:651.78px;font-size:11.6px;color:#333333;letter-spacing:-0.056px;">Checked-Out Documents</span>
<!-- screenshot-tool selection handle remnants -->
<div class="a" style="left:577px;top:695px;width:7px;height:2px;background:#fff;"></div>
<div class="a" style="left:578px;top:696px;width:5px;height:1px;background:#000;"></div>
<div class="a" style="left:1164px;top:346px;width:2px;height:7px;background:#fff;"></div>
<div class="a" style="left:1165px;top:347px;width:1px;height:5px;background:#000;"></div>
<div class="a" style="left:1164px;top:695px;width:2px;height:2px;background:#fff;"></div>
<div class="a" style="left:1165px;top:696px;width:1px;height:1px;background:#000;"></div>

</body>
</html>
